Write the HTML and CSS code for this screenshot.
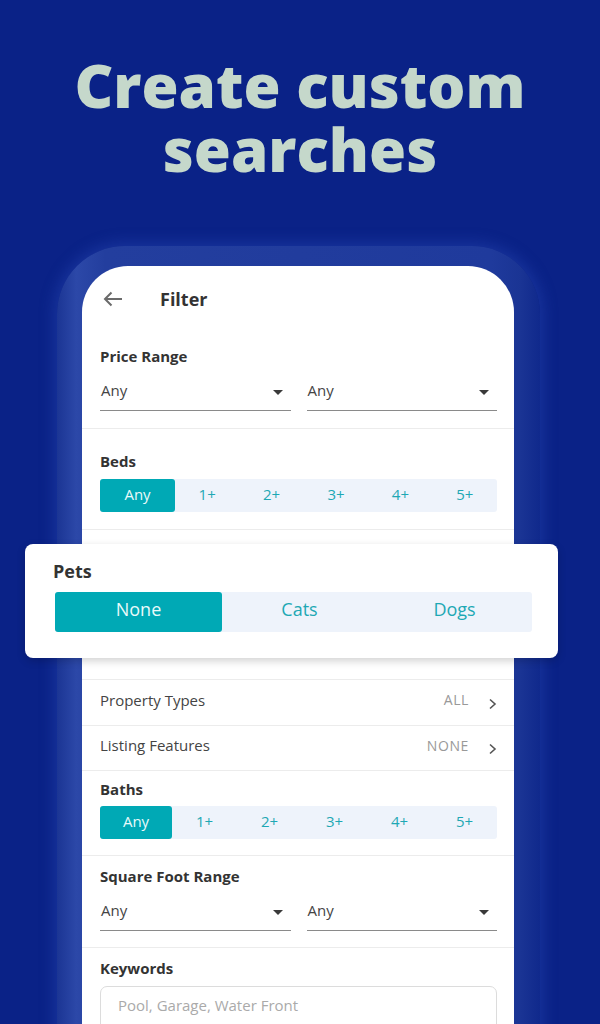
FILE: index.html
```html
<!DOCTYPE html>
<html>
<head>
<meta charset="utf-8">
<link rel="stylesheet" href="styles.css">
</head>
<body>
<div class="page">
  <h1 class="headline">Create custom<br>searches</h1>
  <div class="phone">
    <div class="screen">
      <div class="header">
        <svg class="back" width="20" height="16" viewBox="0 0 20 16"><path d="M19 8H2M8.5 1.5L2 8l6.5 6.5" fill="none" stroke="#6b6b6b" stroke-width="2"/></svg>
        <span class="title">Filter</span>
      </div>

      <div class="section sec-price">
        <div class="label">Price Range</div>
        <div class="pair">
          <div class="select"><span>Any</span><i class="caret"></i></div>
          <div class="select"><span>Any</span><i class="caret"></i></div>
        </div>
      </div>

      <div class="section sec-beds">
        <div class="label">Beds</div>
        <div class="seg seg-beds">
          <div class="opt on">Any</div><div class="opt">1+</div><div class="opt">2+</div><div class="opt">3+</div><div class="opt">4+</div><div class="opt">5+</div>
        </div>
      </div>

      <div class="pets-card">
        <div class="pets-label">Pets</div>
        <div class="seg seg-pets">
          <div class="opt on">None</div><div class="opt">Cats</div><div class="opt">Dogs</div>
        </div>
      </div>

      <div class="row">
        <span class="row-name">Property Types</span>
        <span class="row-val">ALL</span>
        <svg class="chev" width="9" height="12" viewBox="0 0 9 12"><path d="M2 1.5L7 6l-5 4.5" fill="none" stroke="#555" stroke-width="1.6"/></svg>
      </div>
      <div class="row row-2">
        <span class="row-name">Listing Features</span>
        <span class="row-val">NONE</span>
        <svg class="chev" width="9" height="12" viewBox="0 0 9 12"><path d="M2 1.5L7 6l-5 4.5" fill="none" stroke="#555" stroke-width="1.6"/></svg>
      </div>

      <div class="section sec-baths">
        <div class="label">Baths</div>
        <div class="seg seg-baths">
          <div class="opt on">Any</div><div class="opt">1+</div><div class="opt">2+</div><div class="opt">3+</div><div class="opt">4+</div><div class="opt">5+</div>
        </div>
      </div>

      <div class="section sec-sqft">
        <div class="label">Square Foot Range</div>
        <div class="pair">
          <div class="select"><span>Any</span><i class="caret"></i></div>
          <div class="select"><span>Any</span><i class="caret"></i></div>
        </div>
      </div>

      <div class="section sec-kw">
        <div class="label">Keywords</div>
        <div class="input">Pool, Garage, Water Front</div>
      </div>
    </div>
  </div>
</div>
</body>
</html>
```

FILE: styles.css
```css
* { box-sizing: border-box; }
html, body { margin: 0; padding: 0; }
body {
  background: #0a2287;
  width: 600px;
  height: 1024px;
  overflow: hidden;
  font-family: "Open Sans", "Noto Sans", sans-serif;
}
.page {
  display: flex;
  flex-direction: column;
  align-items: flex-start;
}
.headline {
  margin: 0;
  padding-top: 53px;
  width: 600px;
  text-align: center;
  font-family: "Open Sans", sans-serif;
  font-weight: 800;
  font-size: 60px;
  line-height: 64px;
  letter-spacing: 0;
  color: #c5d8cb;
}
.phone {
  margin-top: 65px;
  margin-left: 57px;
  width: 483px;
  padding: 20px 26px 0 25px;
  border-radius: 68px 68px 0 0;
  background: linear-gradient(90deg, #1b3594 0%, #2c48a8 4%, #233e9e 10%, #1f3a9c 90%, #1a3494 96%, #10298c 100%);
  box-shadow: 0 0 14px 4px rgba(40, 70, 180, 0.45);
  height: 800px;
}
.screen {
  background: #fff;
  border-radius: 46px 46px 0 0;
  width: 432px;
  height: 780px;
  padding: 0 17px 0 18px;
  color: #333;
}
.header {
  height: 64px;
  display: flex;
  align-items: center;
  padding-top: 2px;
}
.back { margin-left: 3px; margin-right: 37px; }
.title {
  font-size: 18px;
  font-weight: 700;
  color: #333;
}
.section {
  border-bottom: 1px solid #ececec;
  margin: 0 -17px 0 -18px;
  padding-left: 18px;
  padding-right: 17px;
}
.label {
  font-size: 15px;
  line-height: 20px;
  font-weight: 700;
  color: #333;
}
.sec-price { padding-top: 16px; padding-bottom: 17px; }
.sec-beds { padding-top: 22px; padding-bottom: 17px; }
.sec-baths { padding-top: 8px; padding-bottom: 16px; }
.sec-sqft { padding-top: 10px; padding-bottom: 16px; }
.sec-kw { padding-top: 10px; border-bottom: 0; }

.pair {
  display: grid;
  grid-template-columns: 1fr 1fr;
  gap: 16px;
  margin-top: 13px;
}
.select {
  height: 32px;
  border-bottom: 1px solid #8a8a8a;
  display: flex;
  align-items: flex-start;
  justify-content: space-between;
  font-size: 15px;
  line-height: 22px;
  color: #444;
  padding-left: 1px;
}
.caret {
  width: 0; height: 0;
  border-left: 5px solid transparent;
  border-right: 5px solid transparent;
  border-top: 5px solid #3a3a3a;
  margin-top: 11px;
  margin-right: 8px;
}

.seg {
  display: grid;
  background: #eef3fb;
  border-radius: 3px;
  color: #1ea8b4;
  text-align: center;
}
.seg .opt { display: flex; align-items: center; justify-content: center; padding-bottom: 4px; }
.seg .on { background: #00a9b5; color: #eafafa; border-radius: 3px; }
.seg-beds { grid-template-columns: 75px repeat(5, 1fr); height: 33px; margin-top: 8px; font-size: 15px; }
.seg-baths { grid-template-columns: 72px repeat(5, 1fr); height: 33px; margin-top: 7px; font-size: 15px; }
.seg-pets { grid-template-columns: 167px 1fr 1fr; height: 40px; margin-top: 9px; font-size: 18px; }
.seg-pets .opt { padding-bottom: 6px; }

.pets-card {
  position: relative;
  margin: 14px -61px 0 -75px;
  background: #fff;
  border-radius: 8px;
  box-shadow: 0 3px 8px rgba(0, 0, 0, 0.18);
  padding: 15px 26px 26px 30px;
  height: 114px;
}
.pets-label {
  font-size: 18px;
  line-height: 24px;
  font-weight: 700;
  color: #333;
  margin-left: -2px;
}
.row {
  margin: 0 -17px 0 -18px;
  padding: 0 17px 0 18px;
  height: 46px;
  display: flex;
  align-items: center;
  border-top: 1px solid #ececec;
  font-size: 15px;
}
.row-2 { height: 45px; }
.pets-card + .row { margin-top: 21px; }
.row-name { flex: 1; color: #444; margin-top: -6px; }
.row-val { color: #999; font-size: 14px; letter-spacing: 0.6px; margin-right: 19px; margin-top: -6px; }
.chev { margin-top: 2px; }
.row + .section { border-top: 1px solid #ececec; }

.input {
  margin-top: 8px;
  height: 46px;
  border: 1px solid #dcdcdc;
  border-radius: 7px;
  padding: 8px 17px;
  font-size: 15px;
  color: #aaa;
}
```
